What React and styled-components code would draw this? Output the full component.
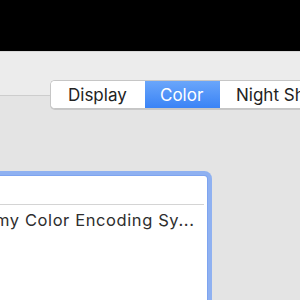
import React from 'react';
import styled, { createGlobalStyle } from 'styled-components';

const Global = createGlobalStyle`
  html, body { margin: 0; padding: 0; background: #000; }
  body { font-family: Inter, "Liberation Sans", sans-serif; }
`;

const Page = styled.div`
  width: 300px;
  height: 300px;
  overflow: hidden;
  display: flex;
  flex-direction: column;
`;

const TopBand = styled.div`
  height: 51px;
  flex-shrink: 0;
  background: #000;
  border-bottom: 1px solid #d8d8d8;
`;

const Window = styled.div`
  flex: 1;
  background: #ececec;
  display: flex;
  flex-direction: column;
  padding-top: 28px;
`;

const Segmented = styled.div`
  position: relative;
  z-index: 1;
  display: flex;
  flex-shrink: 0;
  margin-left: 50px;
  margin-bottom: -14px;
  height: 27px;
  width: 320px;
  background: #fff;
  border: 1px solid #c6c6c6;
  border-right: none;
  border-radius: 5px 0 0 5px;
  box-shadow: 0 1px 0 rgba(0, 0, 0, 0.12);
  overflow: hidden;
`;

const Segment = styled.div`
  width: ${p => p.$w}px;
  flex-shrink: 0;
  display: flex;
  align-items: center;
  padding-left: ${p => p.$pad}px;
  box-sizing: border-box;
  font-size: 17px;
  white-space: nowrap;
  color: ${p => (p.$active ? '#fff' : '#222')};
  background: ${p => (p.$active ? 'linear-gradient(#6aa6fa, #3a83f6)' : '#fff')};
`;

const Pane = styled.div`
  flex: 1;
  background: #e4e4e4;
  border-top: 1px solid #cdcdcd;
  padding-top: 80px;
`;

const ListBox = styled.div`
  margin-left: -60px;
  width: 267px;
  height: 200px;
  background: #fff;
  border-radius: 3px;
  box-shadow: 0 0 0 1px #7ea4ef, 0 0 0 5px #8fb1f1;
`;

const HeaderRow = styled.div`
  height: 28px;
  margin-right: 3px;
  border-bottom: 1px solid #d4d4d4;
`;

const Row = styled.div`
  padding-left: 2px;
  height: 30px;
  display: flex;
  align-items: center;
  font-size: 16.5px;
  letter-spacing: 0.6px;
  color: #2e2e2e;
  white-space: nowrap;
`;

export default function App() {
  return (
    <>
      <Global />
      <Page>
        <TopBand />
        <Window>
          <Segmented>
            <Segment $w={94} $pad={17}>Display</Segment>
            <Segment $w={75} $pad={15} $active>Color</Segment>
            <Segment $w={120} $pad={16}>Night Shift</Segment>
          </Segmented>
          <Pane>
            <ListBox>
              <HeaderRow />
              <Row>Academy Color Encoding Sy...</Row>
            </ListBox>
          </Pane>
        </Window>
      </Page>
    </>
  );
}
